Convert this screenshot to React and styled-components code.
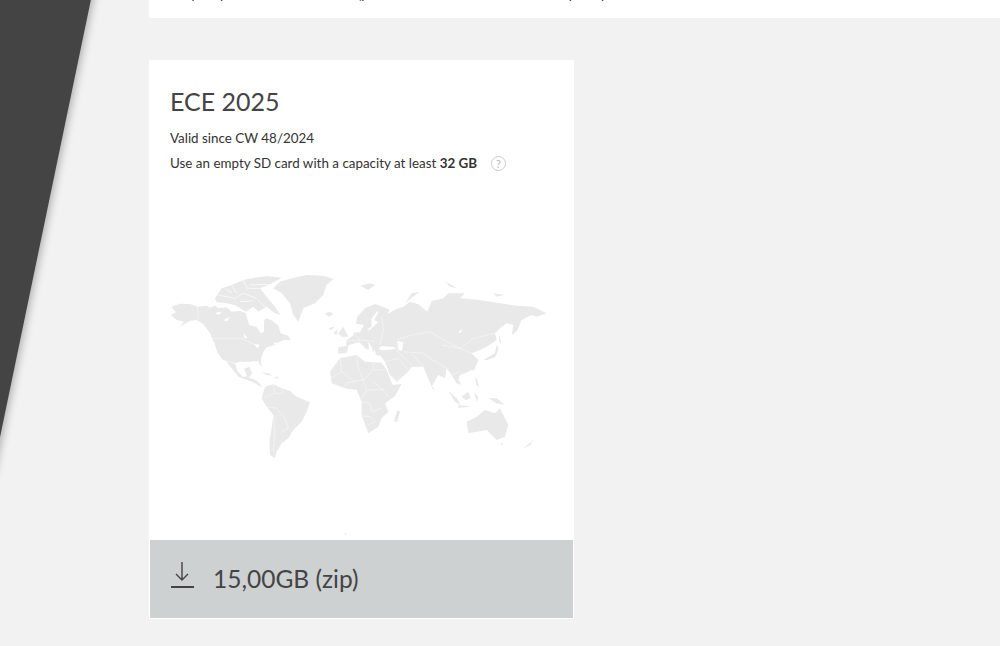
import React from 'react'
import styled, { createGlobalStyle } from 'styled-components'

const GlobalStyle = createGlobalStyle`
  html, body {
    margin: 0;
    padding: 0;
    height: 100%;
    background: #f2f2f2;
    overflow: hidden;
  }
`

const Page = styled.div`
  position: relative;
  width: 1000px;
  height: 646px;
  overflow: hidden;
  padding-left: 149px;
  box-sizing: border-box;
  font-family: Lato, 'Liberation Sans', sans-serif;
  color: #333;
`

const SideWedge = styled.div`
  position: absolute;
  top: -20px;
  left: -300px;
  width: 395px;
  height: 500px;
  background: #444;
  transform: skewX(-11.74deg);
  transform-origin: top right;
  box-shadow: 2px 0 8px rgba(0, 0, 0, 0.3);
`

const TopCard = styled.div`
  position: relative;
  height: 18px;
  background: #fff;
  overflow: hidden;
  padding-left: 21px;
`

const TopLine = styled.p`
  margin: -15px 0 0;
  font-size: 13.4px;
  line-height: 18px;
  white-space: nowrap;
`

const Card = styled.section`
  position: relative;
  display: flex;
  flex-direction: column;
  width: 423px;
  height: 557px;
  margin-top: 42px;
  background: #fff;
  border: 1px solid #fff;
`

const Body = styled.div`
  flex: 1;
  padding: 25px 20px 0;
`

const Title = styled.h2`
  margin: 0;
  font-size: 25px;
  line-height: 30px;
  font-weight: 400;
  color: #444;
`

const Note = styled.p`
  display: flex;
  align-items: center;
  margin: ${(props) => props.$top}px 0 0;
  font-size: 13.4px;
  line-height: 18px;
  color: #333;

  strong {
    font-weight: 700;
  }
`

const Help = styled.span`
  display: flex;
  align-items: center;
  justify-content: center;
  width: 13px;
  height: 13px;
  margin-left: 14px;
  border: 1px solid #ccc;
  border-radius: 50%;
  font-size: 11px;
  line-height: 1;
  color: #b5b5b5;
`

const MapArt = styled.svg`
  display: block;
  width: 380px;
  height: 270px;
  margin-top: 98px;
  filter: blur(0.45px);
`

const Download = styled.div`
  display: flex;
  align-items: center;
  height: 78px;
  padding-left: 21px;
  background: #cdd1d1;
  color: #444;
`

const DownloadIcon = styled.svg`
  display: block;
  width: 23px;
  height: 28px;
  margin: -9px 19px 0 0;
`

const Size = styled.span`
  font-size: 24.5px;
  line-height: 30px;
`

const americas = [
  'M35 125 L60 116 L90 117 L112 125 L140 122 L150 128 L165 122 L175 130 L200 127 L215 140 L240 138 L258 145 L262 162 L268 180 L290 186 L302 205 L312 200 L312 168 L318 160 L335 166 L355 182 L362 205 L385 212 L392 226 L372 224 L352 234 L340 232 L345 240 L318 248 L310 262 L305 275 L302 290 L306 305 L300 300 L295 288 L270 290 L245 290 L225 295 L232 318 L250 336 L262 334 L252 312 L268 305 L276 325 L266 338 L280 342 L295 350 L306 366 L295 361 L280 352 L255 343 L235 335 L215 310 L200 290 L188 285 L172 262 L165 240 L150 205 L130 178 L110 165 L90 168 L60 185 L72 170 L50 165 L32 150 L48 142 Z',
  'M340 70 L360 50 L395 40 L440 30 L490 32 L520 42 L500 60 L490 90 L465 115 L430 130 L415 170 L400 150 L390 115 L365 85 Z',
  'M495 145 L510 140 L520 148 L505 155 Z',
  'M165 100 L185 70 L215 60 L250 45 L275 40 L320 33 L365 38 L330 58 L300 70 L320 95 L345 125 L362 150 L345 145 L320 125 L295 140 L280 125 L258 140 L225 120 L200 115 L170 112 Z',
  'M305 322 L325 325 L340 333 L320 330 Z',
  'M342 335 L356 336 L350 341 Z',
  'M315 365 L340 358 L365 370 L390 378 L410 395 L450 412 L440 440 L425 470 L400 495 L385 520 L365 535 L350 560 L345 580 L330 570 L328 530 L335 490 L340 450 L320 425 L305 400 Z',
]

const americaLakes = [
  'M165 143 L185 140 L176 150 Z',
  'M190 166 L210 155 L202 168 Z',
  'M282 236 L300 240 L292 250 Z',
  'M250 205 L262 218 L254 220 Z',
]

const americaBorders = [
  'M112 125 L115 165',
  'M150 220 L245 220 L285 240',
  'M188 285 L225 295 L245 290',
  'M340 360 L345 385 L310 400',
  'M365 372 L370 385 L345 385',
  'M320 425 L350 430 L375 460 L385 490 L365 500',
  'M340 450 L345 500 L340 560',
]

const arcticChannels = [
  'M175 90 L225 100 L250 85 L290 100',
  'M215 60 L230 85',
  'M250 45 L262 70 L300 70',
  'M240 110 L280 108',
  'M295 105 L320 130',
  'M200 75 L215 82',
  'M270 60 L330 58',
]

const africa = [
  'M30 245 L60 205 L110 195 L135 215 L185 218 L200 240 L218 285 L245 282 L225 318 L195 340 L205 365 L185 385 L175 410 L145 430 L125 375 L125 335 L110 300 L75 295 L35 280 Z',
  'M222 395 L232 360 L240 365 L232 395 Z',
]

const africaBorders = [
  'M60 205 L65 245 L100 275 L130 270 L160 240 L160 218',
  'M110 195 L115 235 L130 270 L140 300 L125 325',
  'M30 265 L65 245',
  'M160 240 L200 240',
  'M140 300 L190 300 L205 320',
  'M75 295 L80 278 L100 275',
  'M125 335 L150 340 L155 365 L185 355',
  'M128 378 L150 380 L165 395 L145 405',
  'M160 275 L190 300',
]

const eurasia = [
  'M-6 266 L-5 247 L18 243 L20 225 L42 210 L38 203 L60 202 L72 180 L48 176 L52 155 L75 130 L105 117 L135 128 L150 136 L140 148 L170 132 L190 125 L210 110 L235 118 L250 130 L262 140 L275 108 L310 100 L325 85 L375 85 L360 100 L420 105 L480 115 L530 122 L580 125 L620 145 L590 155 L575 150 L545 165 L530 200 L515 210 L520 180 L500 175 L480 190 L465 205 L470 225 L440 245 L420 255 L395 265 L415 285 L405 310 L375 325 L360 330 L355 345 L365 360 L350 355 L335 330 L320 310 L315 340 L295 330 L275 365 L260 330 L250 305 L215 305 L205 320 L170 350 L150 330 L135 290 L122 272 L108 270 L105 255 L100 262 L92 240 L85 232 L87 256 L76 250 L58 232 L45 235 L26 240 L20 264 Z',
  'M-5 205 L10 185 L25 215 L5 215 Z',
  'M-18 200 L-8 195 L-8 208 L-18 208 Z',
  'M-35 190 L-15 184 L-25 196 Z',
  'M60 62 L90 55 L105 60 L85 75 Z',
  'M195 115 L215 85 L240 80 L215 98 Z',
  'M315 50 L335 60 L350 70 L330 65 Z',
  'M460 85 L495 90 L470 95 Z',
  'M430 285 L465 265 L470 240 L476 250 L466 276 L440 286 Z',
  'M476 205 L484 235 L478 232 Z',
  'M405 335 L412 345 L418 368 L408 358 Z',
  'M398 305 L404 312 L398 320 Z',
  'M275 365 L282 368 L280 375 Z',
  'M325 378 L350 400 L362 420 L345 410 Z',
  'M365 395 L385 380 L392 398 L378 405 Z',
  'M355 420 L395 425 L355 428 Z',
  'M403 385 L415 395 L410 412 Z',
  'M445 400 L470 400 L495 420 L470 415 Z',
  'M380 470 L410 455 L435 435 L465 445 L480 430 L505 480 L495 515 L470 525 L440 495 L385 505 Z',
  'M480 535 L490 535 L485 541 Z',
  'M550 550 L575 530 L583 520 L572 540 Z',
]

const eurasiaSeas = [
  'M115 252 L125 243 L160 246 L170 250 L150 254 L125 256 Z',
  'M172 228 L190 232 L186 258 L176 255 Z',
  'M355 200 L368 192 L360 205 Z',
  'M80 196 L95 184 L94 162 L112 138 L116 141 L102 165 L114 172 L102 184 L88 196 Z',
]

const eurasiaBorders = [
  'M20 228 L60 225 L105 230',
  'M125 155 L130 195 L120 240',
  'M170 225 L215 210 L270 200 L310 225 L360 250 L400 220 L465 205',
  'M305 240 L360 250 L395 265',
  'M190 260 L250 265 L270 280 L320 310',
  'M165 252 L215 300',
  'M215 265 L250 305',
  'M135 290 L175 280 L205 315',
  'M335 330 L355 320',
  'M40 205 L60 225',
]

const Shapes = ({ list, fill }) =>
  list.map((d) => <path key={d} d={d} fill={fill} />)

const Lines = ({ list, width = 1.3 }) =>
  list.map((d) => <path key={d} d={d} fill="none" stroke="#fff" strokeWidth={width} />)

const WorldMap = () => (
  <MapArt viewBox="170 270 380 270">
    <g transform="translate(160 265) scale(0.3333)">
      <Shapes list={americas} fill="#e9e9e9" />
      <Shapes list={americaLakes} fill="#fff" />
      <Lines list={americaBorders} />
      <Lines list={arcticChannels} width={2} />
    </g>
    <g transform="translate(320 290) scale(0.3333)">
      <Shapes list={africa} fill="#e9e9e9" />
      <Lines list={africaBorders} />
    </g>
    <g transform="translate(340 265) scale(0.3333)">
      <Shapes list={eurasia} fill="#e9e9e9" />
      <Shapes list={eurasiaSeas} fill="#fff" />
      <Lines list={eurasiaBorders} />
    </g>
    <circle cx="345.5" cy="534" r="0.8" fill="#e0e0e0" />
  </MapArt>
)

const App = () => (
  <Page>
    <GlobalStyle />
    <SideWedge />
    <TopCard>
      <TopLine>Simple update of the latest files (please note that all the old files are pull up</TopLine>
    </TopCard>
    <Card>
      <Body>
        <Title>ECE 2025</Title>
        <Note $top={13}>Valid since CW 48/2024</Note>
        <Note $top={7}>
          <span>
            Use an empty SD card with a capacity at least <strong>32 GB</strong>
          </span>
          <Help>?</Help>
        </Note>
        <WorldMap />
      </Body>
      <Download>
        <DownloadIcon viewBox="0 0 23 28">
          <path d="M11 1 V19 M5 13 L11 19 L17 13" fill="none" stroke="#444" strokeWidth="1.4" />
          <path d="M0 26 H23" stroke="#444" strokeWidth="2" />
        </DownloadIcon>
        <Size>15,00GB (zip)</Size>
      </Download>
    </Card>
  </Page>
)

export default App
